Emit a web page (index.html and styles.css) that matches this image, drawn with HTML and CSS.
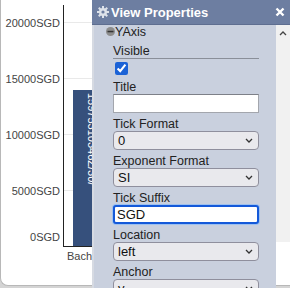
FILE: index.html
```html
<!DOCTYPE html>
<html lang="en">
<head>
    <meta charset="UTF-8">
    <meta name="viewport" content="width=device-width, initial-scale=1.0">
    <title>View Properties</title>
    <link rel="stylesheet" href="styles.css">
</head>
<body>

<!-- Gráfico -->
<div class="card">
    <div class="chart">
        <div class="ylabels">
            <span>20000SGD</span>
            <span>15000SGD</span>
            <span>10000SGD</span>
            <span>5000SGD</span>
            <span class="zero">0SGD</span>
        </div>
        <div class="plotwrap">
            <div class="plot">
                <div class="bar" style="height:156px">
                    <span class="bar-label">15975310346Z/30/</span>
                </div>
            </div>
            <div class="xlabels"><span>Bachelor's</span></div>
        </div>
    </div>
</div>

<!-- Painel de propriedades -->
<div class="panel">
    <div class="panel-header">
        <svg class="gear" width="12" height="12" viewBox="0 0 12 12">
            <g fill="#dde2ea">
                <circle cx="6" cy="6" r="4"/>
                <rect x="5" y="0" width="2" height="12"/>
                <rect x="0" y="5" width="12" height="2"/>
                <rect x="5" y="0" width="2" height="12" transform="rotate(45 6 6)"/>
                <rect x="5" y="0" width="2" height="12" transform="rotate(-45 6 6)"/>
            </g>
            <circle cx="6" cy="6" r="1.6" fill="#6d7ea1"/>
        </svg>
        <span class="panel-title">View Properties</span>
        <svg class="close" width="10" height="10" viewBox="0 0 10 10">
            <path d="M1.5 1.5 L8.5 8.5 M8.5 1.5 L1.5 8.5" stroke="#fff" stroke-width="2.4"/>
        </svg>
    </div>
    <div class="panel-body">
        <div class="props">
            <div class="section-title">
                <svg width="9" height="9" viewBox="0 0 9 9">
                    <circle cx="4.5" cy="4.5" r="4.5" fill="#8d8d8d"/>
                    <rect x="1.5" y="3.8" width="6" height="1.5" fill="#333"/>
                </svg>
                <span>YAxis</span>
            </div>
            <div class="fields">
                <div class="legend">Visible</div>
                <div class="check-row"><input type="checkbox" checked></div>

                <div class="field">
                    <label>Title</label>
                    <div class="text-input"></div>
                </div>
                <div class="field">
                    <label>Tick Format</label>
                    <div class="select"><span>0</span><svg width="8" height="5" viewBox="0 0 8 5"><path d="M1 1 L4 4 L7 1" stroke="#333" stroke-width="1.3" fill="none"/></svg></div>
                </div>
                <div class="field">
                    <label>Exponent Format</label>
                    <div class="select"><span>SI</span><svg width="8" height="5" viewBox="0 0 8 5"><path d="M1 1 L4 4 L7 1" stroke="#333" stroke-width="1.3" fill="none"/></svg></div>
                </div>
                <div class="field">
                    <label>Tick Suffix</label>
                    <div class="text-input focused">SGD</div>
                </div>
                <div class="field">
                    <label>Location</label>
                    <div class="select"><span>left</span><svg width="8" height="5" viewBox="0 0 8 5"><path d="M1 1 L4 4 L7 1" stroke="#333" stroke-width="1.3" fill="none"/></svg></div>
                </div>
                <div class="field">
                    <label>Anchor</label>
                    <div class="select"><span>y</span><svg width="8" height="5" viewBox="0 0 8 5"><path d="M1 1 L4 4 L7 1" stroke="#333" stroke-width="1.3" fill="none"/></svg></div>
                </div>
            </div>
        </div>
        <div class="scroll">
            <svg width="8" height="5" viewBox="0 0 8 5"><path d="M1 4 L4 1 L7 4" stroke="#444" stroke-width="1.3" fill="none"/></svg>
        </div>
    </div>
</div>

</body>
</html>
```

FILE: styles.css
```css
body {
    margin: 0;
    padding: 0;
    width: 290px;
    height: 288px;
    overflow: hidden;
    background-color: #d4d4d4;
    font-family: "Liberation Sans", Arial, sans-serif;
    position: relative;
}
.card {
    margin-top: -10px;
    width: 290px;
    height: 296px;
    box-sizing: border-box;
    background-color: #fff;
    border: 1px solid #b8b8b8;
    border-right: none;
    border-radius: 8px 0 0 8px;
    overflow: hidden;
}
.chart {
    display: flex;
    padding-top: 14px;
}
.ylabels {
    width: 62px;
    box-sizing: border-box;
    padding-top: 12px;
    padding-right: 3px;
    display: flex;
    flex-direction: column;
    gap: 44px;
    text-align: right;
    font-size: 11px;
    line-height: 12px;
    color: #444;
}
.ylabels .zero {
    margin-top: -10px;
}
.plot {
    width: 120px;
    height: 241px;
    border-left: 1px solid #222;
    border-bottom: 1px solid #222;
    padding-left: 9px;
    display: flex;
    align-items: flex-end;
    background-image: repeating-linear-gradient(to top, transparent 0, transparent 55px, #e9e9e9 55px, #e9e9e9 56px);
}
.bar {
    width: 36px;
    background-color: #36507c;
    display: flex;
    justify-content: center;
}
.bar-label {
    writing-mode: vertical-rl;
    color: #fff;
    font-size: 11px;
    padding-top: 3px;
    margin-left: 2px;
}
.xlabels {
    margin-top: 3px;
    padding-left: 4px;
    font-size: 11px;
    line-height: 12px;
    color: #444;
    white-space: nowrap;
}
.panel {
    position: absolute;
    left: 92px;
    top: 0;
    width: 198px;
    height: 288px;
}
.panel-header {
    height: 24px;
    border-bottom: 1px solid #5e6e90;
    background-color: #6d7ea1;
    display: flex;
    align-items: center;
    padding: 0 5px;
    gap: 2px;
}
.panel-title {
    color: #fff;
    font-weight: bold;
    font-size: 13px;
}
.close {
    margin-left: auto;
}
.panel-body {
    display: flex;
    align-items: flex-start;
}
.props {
    width: 184px;
    height: 263px;
    box-sizing: border-box;
    background-color: #c9d0de;
    border-left: 2px solid #d6dae2;
    overflow: hidden;
}
.scroll {
    width: 14px;
    height: 217px;
    background-color: #f1f1f1;
    display: flex;
    justify-content: center;
    padding-top: 6px;
    box-sizing: border-box;
}
.section-title {
    display: flex;
    align-items: center;
    height: 13px;
    padding-left: 12px;
    font-size: 12.5px;
    color: #222;
}
.fields {
    padding: 0 17px 0 19px;
    font-size: 12.5px;
    color: #222;
}
.legend {
    margin-top: 7px;
    line-height: 13px;
    border-bottom: 1px solid #8a8f99;
}
.check-row {
    height: 21px;
}
.check-row input {
    margin: 3px 0 0 2px;
    accent-color: #1b62d6;
}
.field {
    margin-bottom: 4px;
}
.field label {
    display: block;
    line-height: 14px;
}
.text-input {
    height: 19px;
    box-sizing: border-box;
    background-color: #fff;
    border: 1px solid #a3a6ad;
    border-top-color: #7d8088;
    padding-left: 3px;
    font-size: 13px;
    line-height: 17px;
    color: #111;
}
.text-input.focused {
    border: 2px solid #1459d9;
    border-radius: 3px;
    box-shadow: 0 0 0 1px #9dc1f0;
    line-height: 15px;
    padding-left: 2px;
}
.select {
    height: 19px;
    box-sizing: border-box;
    background-color: #e9e9ed;
    border: 1px solid #8f8f9d;
    border-radius: 4px;
    display: flex;
    align-items: center;
    justify-content: space-between;
    padding: 0 5px 0 4px;
    font-size: 13px;
    color: #111;
}
```
